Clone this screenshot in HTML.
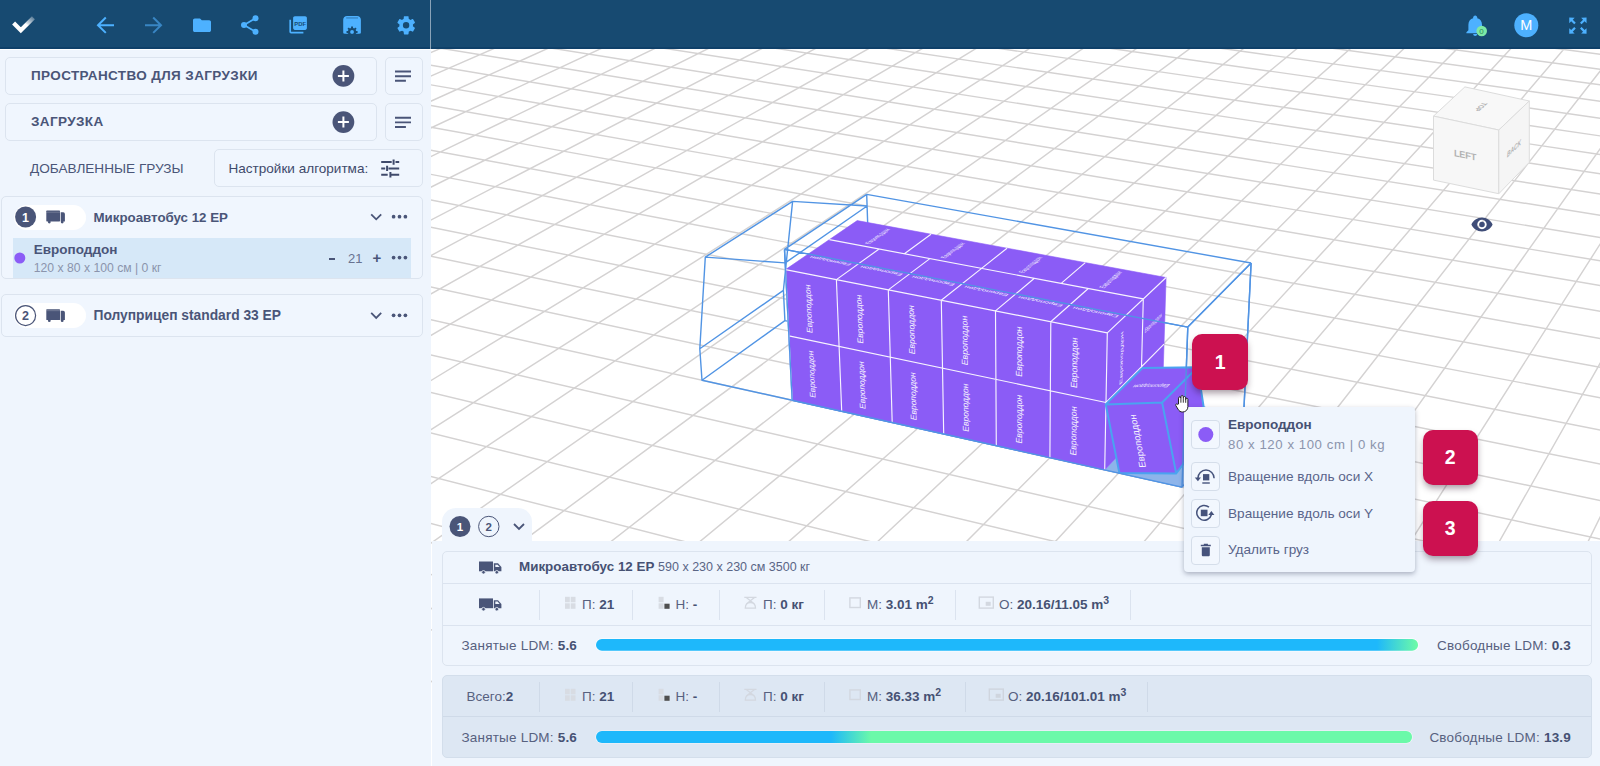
<!DOCTYPE html>
<html lang="ru"><head><meta charset="utf-8"><title>3D</title>
<style>
*{box-sizing:border-box;margin:0;padding:0}
html,body{width:1600px;height:766px;overflow:hidden}
body{font-family:"Liberation Sans",sans-serif;color:#4a5578;background:#fff;position:relative;font-size:14px}
.abs{position:absolute}
#hdr{z-index:5;position:absolute;left:0;top:0;width:1600px;height:49px;background:#174a71;border-bottom:2px solid #0f4069}
#hdr .vl{position:absolute;left:430px;top:0;width:1px;height:49px;background:#8aa3b8}
#side{position:absolute;left:0;top:48px;width:431px;height:718px;background:linear-gradient(#fff 0,#fff 2px,#eff5fd 2px)}
.card{position:absolute;border:1px solid #dce4ef;border-radius:5px;background:#f0f6fe}
.ttl{position:absolute;font-weight:700;font-size:13.5px;letter-spacing:.38px;color:#4a5578;white-space:nowrap}
.t{position:absolute;white-space:nowrap;line-height:1}
.t{color:#57617f}.b{font-weight:700;color:#465173}
#view{position:absolute;left:431px;top:48px;width:1169px;height:718px;overflow:hidden;background:#fff}
#scene{position:absolute;left:-431px;top:-48px}
#bottom{position:absolute;left:432px;top:540.700px;width:1168px;height:226px;background:#eff5fd}
#tab{position:absolute;left:442.300px;top:508.300px;width:89.600px;height:33px;background:#eff5fd;border-radius:14px 14px 0 0}
.vsep{position:absolute;width:1px;height:30px;background:#dbe3ef}
.bar{position:absolute;height:11px;border-radius:6px}
.ibox{position:absolute;left:1191.300px;width:29px;height:29px;border:1px solid #d5deea;border-radius:4px;background:#f2f7fe}
.badge{position:absolute;width:55px;height:55px;border-radius:10px;background:#cc1150;color:#fff;font-weight:700;font-size:19.500px;text-align:center;line-height:55px;box-shadow:0 4px 7px -1px rgba(40,10,30,.42)}
</style></head><body>
<!-- 3D VIEW -->
<div id="view"><svg id="scene" width="1600" height="766" viewBox="0 0 1600 766">
<path d="M702.5 -98.9 L-537.2 396.1 M735.5 -94.8 L-492.0 409.9 M769.0 -90.7 L-445.7 423.9 M802.9 -86.5 L-398.1 438.4 M837.3 -82.2 L-349.3 453.2 M872.2 -77.9 L-299.3 468.4 M907.6 -73.5 L-247.9 484.0 M943.5 -69.0 L-195.1 500.0 M979.9 -64.5 L-140.9 516.4 M1016.8 -59.9 L-85.1 533.4 M1054.2 -55.3 L-27.8 550.8 M1092.2 -50.6 L31.1 568.7 M1130.8 -45.8 L91.8 587.1 M1169.9 -40.9 L154.2 606.0 M1209.6 -36.0 L218.5 625.5 M1249.9 -31.0 L284.8 645.6 M1290.8 -25.9 L353.0 666.4 M1332.4 -20.8 L423.5 687.7 M1374.6 -15.5 L496.1 709.8 M1417.4 -10.2 L571.1 732.6 M1460.9 -4.8 L648.6 756.1 M1505.1 0.7 L728.6 780.4 M1550.0 6.2 L811.4 805.5 M1595.6 11.9 L897.0 831.5 M1641.9 17.6 L985.6 858.4 M1689.0 23.5 L1077.4 886.2 M1736.9 29.4 L1172.5 915.1 M1785.5 35.5 L1271.1 945.0 M1835.0 41.6 L1373.5 976.1 M1885.3 47.9 L1479.8 1008.4 M1936.5 54.2 L1590.3 1041.9 M681.0 -90.4 L1984.6 74.5 M658.9 -81.5 L1980.6 88.8 M636.1 -72.4 L1976.5 103.7 M612.6 -63.1 L1972.2 119.1 M588.5 -53.4 L1967.7 135.1 M563.5 -43.4 L1963.1 151.8 M537.8 -33.2 L1958.2 169.2 M511.3 -22.6 L1953.2 187.3 M483.9 -11.6 L1947.9 206.2 M455.6 -0.4 L1942.4 225.9 M426.4 11.3 L1936.7 246.4 M396.1 23.4 L1930.7 267.9 M364.9 35.9 L1924.4 290.4 M332.5 48.8 L1917.8 314.0 M298.9 62.2 L1910.9 338.8 M264.1 76.1 L1903.7 364.8 M228.0 90.5 L1896.1 392.1 M190.6 105.5 L1888.1 420.8 M151.7 121.0 L1879.6 451.2 M111.3 137.2 L1870.7 483.2 M69.2 154.0 L1861.2 517.0 M25.4 171.5 L1851.2 552.9 M-20.2 189.7 L1840.6 590.9 M-67.8 208.7 L1829.4 631.4 M-117.5 228.5 L1817.4 674.4 M-169.4 249.3 L1804.5 720.3 M-223.7 270.9 L1790.9 769.5 M-280.5 293.6 L1776.2 822.1 M-340.1 317.4 L1760.4 878.7 M-402.6 342.4 L1743.4 939.6 M-468.2 368.6 L1725.1 1005.4" stroke="#d4d2d2" stroke-width="1.45" fill="none"/>
<path d="M871.5 338.5 L1243.6 415.5 M871.5 338.5 L792.2 400.3 M871.5 338.5 L866.7 194.4 M866.7 194.4 L1251.1 263.0 M866.7 194.4 L784.5 249.4 M792.2 400.3 L1182.0 487.1 M792.2 400.3 L784.5 249.4 M784.5 249.4 L1187.8 327.1 M1243.6 415.5 L1182.0 487.1 M1243.6 415.5 L1251.1 263.0 M1251.1 263.0 L1187.8 327.1 M1182.0 487.1 L1187.8 327.1 M784.9 320.6 L783.4 290.4 L792.6 201.4 L867.1 206.0 L871.5 338.5 Z M702.0 380.2 L699.8 348.7 L705.3 257.1 L785.2 262.9 L792.2 400.3 Z M784.9 320.6 L702.0 380.2 M783.4 290.4 L699.8 348.7 M792.6 201.4 L705.3 257.1 M867.1 206.0 L785.2 262.9" stroke="#5194e4" stroke-width="1.4" fill="none" stroke-linejoin="round"/>
<path d="M1104.7 469.9 L1182.0 487.1 L1215.1 448.7 L1139.8 432.5 Z" fill="#8db4ea"/>
<path d="M785.5 269.6 L1107.3 332.9 L1166.1 277.5 L857.2 220.6 Z M792.2 400.3 L1104.7 469.9 L1107.3 332.9 L785.5 269.6 Z M1104.7 469.9 L1162.0 408.9 L1166.1 277.5 L1107.3 332.9 Z" fill="#8b5cf6" stroke="#8b5cf6" stroke-width="0.6"/>
<path d="M792.2 400.3 L785.5 269.6 M841.7 411.3 L836.4 279.6 M892.2 422.6 L888.3 289.9 M943.7 434.0 L941.3 300.3 M996.3 445.8 L995.5 310.9 M1049.9 457.7 L1050.8 321.8 M1104.7 469.9 L1107.3 332.9 M788.9 335.9 L1106.0 402.5 M785.5 269.6 L1107.3 332.9 M836.4 279.6 L879.1 249.0 M888.3 289.9 L929.9 258.6 M941.3 300.3 L981.6 268.4 M995.5 310.9 L1034.4 278.3 M1050.8 321.8 L1088.3 288.5 M829.4 239.6 L1143.3 298.9 M904.4 253.8 L931.0 234.2 M981.6 268.4 L1007.0 248.2 M1061.2 283.4 L1085.3 262.6 M1107.3 332.9 L1166.1 277.5 M1139.8 432.5 L1143.3 298.9 M1106.0 402.5 L1164.0 344.1" stroke="#ffffff" stroke-opacity="0.93" stroke-width="1.15" fill="none"/>
<g font-family="Liberation Sans, sans-serif"><text transform="matrix(-0.0295 -0.6461 0.6226 0.1349 815.43 374.99)" font-size="12.9" text-anchor="middle" y="-1.68" fill="#fff" opacity="0.93" >Европоддон</text>
<text transform="matrix(-0.0304 -0.6649 0.6313 0.1285 812.43 309.45)" font-size="12.9" text-anchor="middle" y="-1.68" fill="#fff" opacity="0.93" >Европоддон</text>
<text transform="matrix(-0.0226 -0.6511 0.6353 0.1376 865.74 385.89)" font-size="12.9" text-anchor="middle" y="-1.68" fill="#fff" opacity="0.93" >Европоддон</text>
<text transform="matrix(-0.0233 -0.6702 0.6443 0.1312 863.44 319.84)" font-size="12.9" text-anchor="middle" y="-1.68" fill="#fff" opacity="0.93" >Европоддон</text>
<text transform="matrix(-0.0154 -0.6561 0.6484 0.1405 917.07 397.01)" font-size="12.9" text-anchor="middle" y="-1.68" fill="#fff" opacity="0.93" >Европоддон</text>
<text transform="matrix(-0.0158 -0.6756 0.6577 0.1339 915.52 330.44)" font-size="12.9" text-anchor="middle" y="-1.68" fill="#fff" opacity="0.93" >Европоддон</text>
<text transform="matrix(-0.0078 -0.6612 0.6618 0.1434 969.47 408.36)" font-size="12.9" text-anchor="middle" y="-1.68" fill="#fff" opacity="0.93" >Европоддон</text>
<text transform="matrix(-0.0081 -0.6811 0.6716 0.1367 968.68 341.26)" font-size="12.9" text-anchor="middle" y="-1.68" fill="#fff" opacity="0.93" >Европоддон</text>
<text transform="matrix(0.0000 -0.6664 0.6757 0.1464 1022.97 419.95)" font-size="12.9" text-anchor="middle" y="-1.68" fill="#fff" opacity="0.93" >Европоддон</text>
<text transform="matrix(0.0000 -0.6866 0.6859 0.1396 1022.97 352.32)" font-size="12.9" text-anchor="middle" y="-1.68" fill="#fff" opacity="0.93" >Европоддон</text>
<text transform="matrix(0.0082 -0.6717 0.6901 0.1495 1077.59 431.79)" font-size="12.9" text-anchor="middle" y="-1.68" fill="#fff" opacity="0.93" >Европоддон</text>
<text transform="matrix(0.0085 -0.6923 0.7007 0.1427 1078.43 363.61)" font-size="12.9" text-anchor="middle" y="-1.68" fill="#fff" opacity="0.93" >Европоддон</text>
<text transform="matrix(0.0147 -0.6657 0.2948 -0.3065 1121.74 424.05)" font-size="13.5" text-anchor="middle" y="-1.35" fill="#fff" opacity="0.9" >Европоддон</text>
<text transform="matrix(0.0151 -0.6859 0.2988 -0.2924 1123.23 356.48)" font-size="13.5" text-anchor="middle" y="-1.35" fill="#fff" opacity="0.9" >Европоддон</text>
<text transform="matrix(0.2827 -0.2753 -0.0191 0.6723 1153.29 322.49)" font-size="10.5" text-anchor="middle" y="3.78" fill="#fff" opacity="0.9" >Европоддон</text>
<text transform="matrix(-0.6292 -0.1215 0.3623 -0.2534 830.32 260.99)" font-size="11.4" text-anchor="middle" y="4.10" fill="#fff" opacity="0.9" >Европоддон</text>
<text transform="matrix(-0.6421 -0.1240 0.3524 -0.2586 881.18 270.82)" font-size="11.4" text-anchor="middle" y="4.10" fill="#fff" opacity="0.9" >Европоддон</text>
<text transform="matrix(-0.6554 -0.1266 0.3420 -0.2640 933.08 280.84)" font-size="11.4" text-anchor="middle" y="4.10" fill="#fff" opacity="0.9" >Европоддон</text>
<text transform="matrix(-0.6692 -0.1292 0.3311 -0.2695 986.07 291.08)" font-size="11.4" text-anchor="middle" y="4.10" fill="#fff" opacity="0.9" >Европоддон</text>
<text transform="matrix(-0.6833 -0.1320 0.3197 -0.2752 1040.17 301.52)" font-size="11.4" text-anchor="middle" y="4.10" fill="#fff" opacity="0.9" >Европоддон</text>
<text transform="matrix(-0.6979 -0.1348 0.3077 -0.2811 1095.43 312.20)" font-size="11.4" text-anchor="middle" y="4.10" fill="#fff" opacity="0.9" >Европоддон</text>
<text transform="matrix(0.3408 -0.2405 0.6190 0.1154 877.29 236.35)" font-size="11" text-anchor="middle" y="3.96" fill="#fff" opacity="0.9" >Европоддон</text>
<text transform="matrix(0.3262 -0.2478 0.6376 0.1189 952.67 250.40)" font-size="11" text-anchor="middle" y="3.96" fill="#fff" opacity="0.9" >Европоддон</text>
<text transform="matrix(0.3106 -0.2554 0.6572 0.1225 1030.34 264.88)" font-size="11" text-anchor="middle" y="3.96" fill="#fff" opacity="0.9" >Европоддон</text>
<text transform="matrix(0.2938 -0.2634 0.6776 0.1263 1110.41 279.81)" font-size="11" text-anchor="middle" y="3.96" fill="#fff" opacity="0.9" >Европоддон</text></g>
<path d="M1105.7 404.4 L1162.1 402.5 L1176.2 473.4 L1119.4 473.0 Z M1105.7 404.4 L1142.5 368.0 L1197.5 367.2 L1162.1 402.5 Z M1162.1 402.5 L1197.5 367.2 L1207.5 432.0 L1176.2 473.4 Z" fill="#8b5cf6" stroke="#4aa3f0" stroke-width="2" stroke-linejoin="round"/>
<g font-family="Liberation Sans, sans-serif" fill="#fff"><text transform="matrix(0.19 0.98 -0.98 0.03 1137.5 441) scale(-1,-1)" font-size="9.6" text-anchor="middle" y="3.4" opacity=".95">Европоддон</text><text transform="matrix(0.98 -0.02 -0.70 0.70 1151 386) scale(-1,-1)" font-size="6.5" text-anchor="middle" y="2.3" opacity="0.9">Европоддон</text></g>
<path d="M784.5 249.4 L1187.8 327.1 M792.2 400.3 L784.5 249.4 M792.2 400.3 L1182.0 487.1 M1182.0 487.1 L1187.8 327.1 M1187.8 327.1 L1251.1 263.0 M1243.6 415.5 L1251.1 263.0 M1243.6 415.5 L1182.0 487.1" stroke="#5194e4" stroke-width="1.4" fill="none"/>
</svg></div>
<!-- VIEW CUBE + EYE -->
<svg class="abs" style="left:1420px;top:70px" width="130" height="175" viewBox="1420 70 130 175">
<g stroke="#dcdcdc" stroke-width="1" stroke-linejoin="round">
<path d="M1433.5 116.1 L1464.9 86.9 L1529.3 101 L1498.8 130 Z" fill="#f8f8f8"/>
<path d="M1433.5 116.1 L1498.8 130 L1498.8 193.7 L1433.5 180.1 Z" fill="#f7f7f7"/>
<path d="M1498.8 130 L1529.3 101 L1529.3 162.3 L1498.8 193.7 Z" fill="#f5f5f5"/>
</g>
<g font-family="Liberation Sans, sans-serif" fill="#b2b2b2">
<text transform="matrix(1 .21 0 1 1465 158.300)" font-size="9.300" font-weight="700" text-anchor="middle" letter-spacing="-.3">LEFT</text>
<text transform="matrix(.62 -.6 0 1 1514 151)" font-size="7.800" text-anchor="middle" font-weight="700" font-style="italic">BACK</text>
<text transform="matrix(-.55 .5 -.9 -.2 1481 107)" font-size="8" text-anchor="middle" font-weight="700" y="3">TOP</text>
</g>
<path d="M1482 217.5c-4.8 0-8.9 2.9-10.6 7 1.7 4.1 5.800 7 10.6 7s8.900-2.900 10.600-7c-1.700-4.100-5.800-7-10.600-7zm0 11.700a4.700 4.700 0 1 1 0-9.400 4.700 4.700 0 0 1 0 9.400zm0-7.500a2.800 2.800 0 1 0 0 5.600 2.800 2.800 0 0 0 0-5.600z" fill="#3f4d78"/>
</svg>

<!-- HEADER -->
<div id="hdr"><div class="vl"></div>
<svg class="abs" style="left:0;top:0" width="1600" height="48" viewBox="0 0 1600 48">
<defs><linearGradient id="ck" x1="0" y1="1" x2="1" y2="0"><stop offset=".55" stop-color="#fff"/><stop offset=".62" stop-color="#d8dfe6"/><stop offset="1" stop-color="#5c7f9a"/></linearGradient></defs>
<path d="M13.600 23.100 L20.800 30.300 L33.400 17.700" fill="none" stroke="url(#ck)" stroke-width="4.200"/>
<g fill="none" stroke="#4db1ff" stroke-width="2">
<path d="M114 25.200H99M105.800 17.500L98 25.200l7.800 7.700"/>
<path d="M145 25.200h15M153.200 17.500l7.800 7.700-7.800 7.700" stroke="#3986c4"/>
</g>
<g fill="#4db1ff">
<path d="M200 18.500h-5.200c-1 0-1.800.8-1.800 1.800v10c0 1 .8 1.800 1.800 1.800h14.400c1 0 1.800-.8 1.800-1.800v-8.200c0-1-.8-1.800-1.800-1.800h-7.400z"/>
<g><circle cx="255.500" cy="18.300" r="3"/><circle cx="244" cy="25" r="3"/><circle cx="255.500" cy="31.700" r="3"/><path d="M244 25l11.500-6.700M244 25l11.500 6.700" stroke="#4db1ff" stroke-width="1.800" fill="none"/></g>
<path d="M294.900 16.300h10.200c1 0 1.800.8 1.800 1.800v10c0 1-.8 1.800-1.800 1.800h-10.200c-1 0-1.800-.8-1.800-1.800v-10c0-1 .8-1.800 1.800-1.800z"/>
<path d="M290.200 19.800v11.900c0 .5.400.9.900.9h12.300" fill="none" stroke="#4db1ff" stroke-width="1.700"/>
<path d="M347 16h10.100c2.100 0 3.800 1.700 3.800 3.800v12.600c0 .8-.6 1.400-1.400 1.400h-1c-.8 0-1.400-.6-1.400-1.400v-1.900h-10.100v1.900c0 .8-.6 1.400-1.400 1.400h-1c-.8 0-1.400-.6-1.400-1.400V19.800c0-2.100 1.700-3.800 3.800-3.800z"/>
<rect x="345.600" y="26" width="13" height="7.800"/>
<path d="M351.09 26.48 L353.01 26.48 L353.03 27.92 L354.24 28.42 L355.27 27.42 L356.63 28.78 L355.63 29.81 L356.13 31.02 L357.57 31.04 L357.57 32.96 L356.13 32.98 L355.63 34.19 L356.63 35.22 L355.27 36.58 L354.24 35.58 L353.03 36.08 L353.01 37.52 L351.09 37.52 L351.07 36.08 L349.86 35.58 L348.83 36.58 L347.47 35.22 L348.47 34.19 L347.97 32.98 L346.53 32.96 L346.53 31.04 L347.97 31.02 L348.47 29.81 L347.47 28.78 L348.83 27.42 L349.86 28.42 L351.07 27.92Z" fill="#174a71"/>
<circle cx="352.050" cy="32" r="1.900"/>
<rect x="343" y="33.900" width="18.200" height="4" fill="#174a71"/>
<path d="M413.300 26c0-.3.100-.6.100-.900s0-.6-.1-.9l1.900-1.500c.2-.1.200-.4.100-.6l-1.800-3.100c-.1-.2-.4-.3-.6-.2l-2.200.9c-.5-.4-1-.7-1.500-.9l-.3-2.400c0-.2-.2-.4-.5-.4h-3.600c-.2 0-.4.200-.5.400l-.3 2.400c-.5.200-1.100.5-1.500.9l-2.200-.9c-.2-.1-.5 0-.6.200l-1.800 3.100c-.1.200-.1.500.1.600l1.900 1.500c0 .3-.1.600-.1.900s0 .6.100.9l-1.900 1.500c-.2.100-.2.400-.1.600l1.800 3.100c.1.200.4.300.6.200l2.200-.9c.5.400 1 .7 1.500.9l.3 2.400c0 .2.200.4.500.4h3.600c.2 0 .4-.2.500-.4l.3-2.400c.5-.2 1.100-.5 1.500-.9l2.200.9c.2.100.5 0 .6-.2l1.800-3.100c.1-.2.100-.5-.1-.6zm-6.800 2.300a3.200 3.200 0 1 1 0-6.400 3.200 3.200 0 0 1 0 6.400z" transform="translate(-.4 .2) scale(1.0)"/>
</g>
<g font-family="Liberation Sans, sans-serif" font-weight="700" font-size="5.900" fill="#174a71"><text x="294.300" y="25.800" letter-spacing="0">PDF</text></g>
<rect x="346.200" y="17" width="11.800" height="1.800" fill="#174a71" opacity=".3"/>
<path d="M349 33.700v-1.500l1.300-.2.500-1.200-.8-1 1.100-1.100 1 .8 1.200-.5.200-1.300" fill="none"/>
<!-- bell -->
<path transform="translate(.9 -.7)" d="M1474.300 36.800c1.100 0 2-.9 2-2h-4c0 1.100.9 2 2 2zm6.800-5.800v-5.600c0-3.200-1.700-5.800-4.700-6.500v-.7c0-.9-.9-2.100-2.100-2.100s-2.100 1.200-2.100 2.100v.7c-3 .7-4.700 3.300-4.700 6.500V31l-2 2v1h17.600v-1z" fill="#4db1ff"/>
<circle cx="1481.700" cy="31" r="5.300" fill="#7de9a6"/>
<text x="1481.600" y="33.700" font-family="Liberation Sans, sans-serif" font-size="8" fill="#2f8a57" text-anchor="middle">0</text>
<circle cx="1526.300" cy="25.300" r="12" fill="#4db1ff"/>
<text x="1526.300" y="30.300" font-family="Liberation Sans, sans-serif" font-size="14.500" fill="#fff" text-anchor="middle">M</text>
<g fill="#4db1ff" transform="translate(1577.900 25.700) scale(.92) translate(-1577.900 -25.850)">
<path d="M1568.500 17v6.200l2.100-2.100 3.300 3.300 1.700-1.700-3.300-3.300 2.100-2.100z"/>
<path d="M1587.300 17v6.200l-2.100-2.100-3.300 3.300-1.700-1.700 3.300-3.300-2.100-2.100z"/>
<path d="M1568.500 34.700v-6.200l2.100 2.100 3.300-3.300 1.700 1.700-3.300 3.300 2.100 2.100z" transform="translate(0 0)"/>
<path d="M1587.300 34.700v-6.200l-2.100 2.100-3.300-3.300-1.700 1.700 3.300 3.300-2.100 2.100z"/>
</g>
</svg>
</div>

<!-- SIDEBAR -->
<div id="side">
<div class="card" style="left:5px;top:8.500px;width:372px;height:38.500px"></div>
<div class="card" style="left:385px;top:8.500px;width:38px;height:38.500px"></div>
<div class="card" style="left:5px;top:55px;width:372px;height:38px"></div>
<div class="card" style="left:385px;top:55px;width:38px;height:38px"></div>
<div class="ttl" style="left:31px;top:20px">ПРОСТРАНСТВО ДЛЯ ЗАГРУЗКИ</div>
<div class="ttl" style="left:31px;top:66px">ЗАГРУЗКА</div>
<div class="t" style="left:30px;top:113.500px;font-size:13.600px;color:#4a5578">ДОБАВЛЕННЫЕ ГРУЗЫ</div>
<div class="card" style="left:214px;top:101px;width:209px;height:38px"></div>
<div class="t" style="left:228.500px;top:113.500px;font-size:13.550px;color:#3f4a6b">Настройки алгоритма:</div>
<svg class="abs" style="left:0;top:0" width="431" height="300" viewBox="0 48 431 300">
<g fill="#4a5578">
<circle cx="343.400" cy="75.900" r="10.900"/><circle cx="343.400" cy="122.100" r="10.900"/>
<g fill="none" stroke="#4a5578" stroke-width="1.900">
<path d="M395 71.500h16M395 76.200h16M395 80.800h10.900"/>
<path d="M395 117.700h16M395 122.400h16M395 127h10.900"/>
</g>
<!-- tune icon -->
<g fill="none" stroke="#3f4a6b" stroke-width="2">
<path d="M381.200 162.100h10.500M395.500 162.100h3.700M381.200 168.400h4M388.500 168.400h10.700M381.200 174.700h6.500M390.500 174.700h8.700M393.600 159.400v5.400M387.100 165.700v5.400M390.400 172v5.400"/>
</g>
</g>
<g fill="none" stroke="#fff" stroke-width="2"><path d="M337.900 75.900h11M343.400 70.400v11M337.900 122.100h11M343.400 116.600v11"/></g>
</svg>

<!-- cargo space cards -->
<div class="card" style="left:1px;top:147.500px;width:422px;height:83.500px"></div>
<div class="abs" style="left:13px;top:190px;width:398px;height:40px;background:#d6e8f8"></div>
<div class="abs" style="left:14px;top:156.500px;width:72px;height:25px;border-radius:13px;background:#fff"></div>
<div class="t b" style="left:93.500px;top:162.500px;font-size:13.300px;color:#4a5578">Микроавтобус 12 ЕР</div>
<div class="t b" style="left:33.800px;top:195px;font-size:13.500px;color:#4a5578">Европоддон</div>
<div class="t" style="left:33.800px;top:213.500px;font-size:12.200px;color:#8b94ac">120 x 80 x 100 см | 0 кг</div>
<div class="abs" style="left:329.400px;top:209.700px;width:6px;height:2.200px;background:#4a5578"></div>
<div class="t" style="left:348px;top:203.500px;font-size:13px;color:#687290">21</div>
<div class="t b" style="left:372.500px;top:201.500px;font-size:15px;color:#4a5578">+</div>

<div class="card" style="left:1px;top:246px;width:422px;height:43px"></div>
<div class="abs" style="left:14px;top:255px;width:72px;height:25px;border-radius:13px;background:#fff"></div>
<div class="t b" style="left:93.500px;top:260.500px;font-size:13.800px;color:#4a5578">Полуприцеп standard 33 ЕР</div>
<svg class="abs" style="left:0;top:0" width="431" height="300" viewBox="0 48 431 300">
<circle cx="25.600" cy="217" r="10.500" fill="#4a5578"/>
<circle cx="25.600" cy="315.600" r="10" fill="#fff" stroke="#4a5578" stroke-width="1.200"/>
<g font-family="Liberation Sans, sans-serif" font-weight="700" font-size="12.500" text-anchor="middle"><text x="25.600" y="221.500" fill="#fff">1</text><text x="25.600" y="320" fill="#4a5578">2</text></g>
<g id="trk" fill="#4a5578">
<rect x="46.300" y="210.600" width="13.700" height="10.800" rx=".6"/><path d="M60.700 212.200h2.500a1.700 1.700 0 0 1 1.700 1.700v7.500h-4.200z"/>
<circle cx="49.300" cy="222.100" r="1.400"/><circle cx="62.200" cy="222.100" r="1.400"/>
<rect x="46.300" y="211.800" width="13.700" height=".7" fill="#fff" opacity=".3"/>
</g>
<use href="#trk" y="98.600"/>
<g fill="none" stroke="#4a5578" stroke-width="1.800"><path d="M371.200 214.300l5 5 5-5"/><path d="M371.200 312.900l5 5 5-5"/></g>
<g fill="#4a5578">
<circle cx="393.600" cy="216.700" r="1.850"/><circle cx="399.500" cy="216.700" r="1.850"/><circle cx="405.400" cy="216.700" r="1.850"/>
<circle cx="393.600" cy="257.600" r="1.850"/><circle cx="399.500" cy="257.600" r="1.850"/><circle cx="405.400" cy="257.600" r="1.850"/>
<circle cx="393.600" cy="315.300" r="1.850"/><circle cx="399.500" cy="315.300" r="1.850"/><circle cx="405.400" cy="315.300" r="1.850"/>
</g>
<circle cx="19.800" cy="258" r="5.500" fill="#8b5cf6"/>
</svg>
</div>

<!-- BOTTOM PANEL -->
<div id="tab"></div>
<div id="bottom"></div>
<div class="card" style="left:442px;top:550.600px;width:1150px;height:115px;background:#eff5fd"></div>
<div class="abs" style="left:443px;top:583.400px;width:1148px;height:1px;background:#dbe3ef"></div>
<div class="abs" style="left:443px;top:624.500px;width:1148px;height:1px;background:#dbe3ef"></div>
<div class="card" style="left:442px;top:675.300px;width:1150px;height:83px;background:#dde7f3;border-color:#d3deeb"></div>
<div class="abs" style="left:443px;top:716.300px;width:1148px;height:1px;background:#cfdae8"></div>
<svg class="abs" style="left:431px;top:500px" width="1169" height="266" viewBox="431 500 1169 266">
<circle cx="460" cy="526.500" r="10.500" fill="#4a5578"/>
<circle cx="488.800" cy="526.500" r="10.200" fill="none" stroke="#4a5578" stroke-width="1"/>
<g font-family="Liberation Sans, sans-serif" font-weight="700" font-size="11.500" text-anchor="middle"><text x="460" y="530.600" fill="#fff">1</text><text x="488.600" y="530.600" fill="#4a5578">2</text></g>
<path d="M514 524l5 5 5-5" fill="none" stroke="#4a5578" stroke-width="1.800"/>
<g id="trk2" fill="#4a5578">
<path d="M479 561.500h14v9.800h-14z"/><path d="M493.800 563.300h4.200l3.400 3.700v4.300h-7.600z"/>
<circle cx="483.500" cy="572.300" r="1.800" stroke="#eff5fd" stroke-width=".8"/><circle cx="496.800" cy="572.300" r="1.800" stroke="#eff5fd" stroke-width=".8"/>
<path d="M495.300 564.700h2.300l2 2.300h-4.300z" fill="#eff5fd"/>
</g>
<use href="#trk2" y="36.900"/>
<!-- small stat icons -->
<g id="ics">
<g fill="#d8dce3"><rect x="565" y="596.800" width="4.800" height="5.500"/><rect x="570.700" y="596.800" width="4.800" height="5.500"/><rect x="565" y="603.300" width="4.800" height="5.500"/><rect x="570.700" y="603.300" width="4.800" height="5.500"/></g>
<rect x="658.600" y="596.800" width="5" height="5.500" fill="#d8dce3"/><rect x="658.600" y="603.300" width="5" height="5.500" fill="#d8dce3"/><rect x="664.400" y="603.700" width="5.200" height="5.100" fill="#4f4f4f"/>
<g fill="none" stroke="#d3d8e0" stroke-width="1.300"><path d="M744.300 597.300h12.200M746.300 597.500l8.200 6.500M754.500 597.500l-8.200 6.500M745.300 608.200c0-3.600 2-5.600 5.100-5.600s5.100 2 5.100 5.600z"/></g>
<rect x="849.900" y="597.900" width="10.400" height="9.600" fill="none" stroke="#d3d8e0" stroke-width="1.400"/>
</g>
<rect x="979.300" y="597.100" width="14" height="11" fill="none" stroke="#d3d8e0" stroke-width="1.400"/><rect x="985.700" y="601.800" width="5" height="4" fill="#d3d8e0"/>
<use href="#ics" y="92"/>
<rect x="989.300" y="689.100" width="14" height="11" fill="none" stroke="#cfd5de" stroke-width="1.400"/><rect x="995.700" y="693.800" width="5" height="4" fill="#cfd5de"/>
<defs>
<linearGradient id="g1" x1="0" x2="1"><stop offset="0" stop-color="#1eb8fb"/><stop offset=".95" stop-color="#1eb8fb"/><stop offset=".998" stop-color="#6bf9a9"/></linearGradient>
<linearGradient id="g2" x1="0" x2="1"><stop offset="0" stop-color="#1eb8fb"/><stop offset=".288" stop-color="#1eb8fb"/><stop offset=".337" stop-color="#6bf9a9"/></linearGradient>
</defs>
<rect x="595.300" y="638.300" width="823.500" height="13.200" rx="6.600" fill="#fff" opacity=".8"/><rect x="596" y="639" width="822.100" height="11.800" rx="5.900" fill="url(#g1)"/>
<rect x="595.300" y="730.400" width="817.500" height="13.200" rx="6.600" fill="#fff" opacity=".6"/><rect x="596" y="731.100" width="816.100" height="11.800" rx="5.900" fill="url(#g2)"/>
</svg>
<div class="vsep" style="left:539px;top:590px"></div><div class="vsep" style="left:632px;top:590px"></div><div class="vsep" style="left:719px;top:590px"></div><div class="vsep" style="left:824px;top:590px"></div><div class="vsep" style="left:955px;top:590px"></div><div class="vsep" style="left:1130px;top:590px"></div>
<div class="vsep" style="left:539px;top:682px;background:#cfdae8"></div><div class="vsep" style="left:632px;top:682px;background:#cfdae8"></div><div class="vsep" style="left:719px;top:682px;background:#cfdae8"></div><div class="vsep" style="left:824px;top:682px;background:#cfdae8"></div><div class="vsep" style="left:965px;top:682px;background:#cfdae8"></div><div class="vsep" style="left:1147px;top:682px;background:#cfdae8"></div>

<div class="t b" style="left:519px;top:559.500px;font-size:13.400px">Микроавтобус 12 ЕР <span style="font-weight:400;font-size:12.500px;color:#5a6586;position:relative;top:.7px">590 x 230 x 230 см 3500 кг</span></div>
<div class="t" style="left:582px;top:597.500px;font-size:13.500px">П: <span class="b">21</span></div>
<div class="t" style="left:675.500px;top:597.500px;font-size:13.500px">Н: <span class="b">-</span></div>
<div class="t" style="left:763px;top:597.500px;font-size:13.500px">П: <span class="b">0 кг</span></div>
<div class="t" style="left:867px;top:597.500px;font-size:13.500px">М: <span class="b">3.01 m<sup style="font-size:10.500px;vertical-align:5.500px;line-height:0">2</sup></span></div>
<div class="t" style="left:999px;top:597.500px;font-size:13.500px">О: <span class="b">20.16/11.05 m<sup style="font-size:10.500px;vertical-align:5.500px;line-height:0">3</sup></span></div>
<div class="t" style="left:461.500px;top:638.500px;font-size:13.500px;letter-spacing:.2px">Занятые LDM: <span class="b">5.6</span></div>
<div class="t" style="right:29px;top:638.500px;font-size:13.500px;letter-spacing:.2px">Свободные LDM: <span class="b">0.3</span></div>

<div class="t" style="left:466.500px;top:689.500px;font-size:13.500px">Всего:<span class="b">2</span></div>
<div class="t" style="left:582px;top:689.500px;font-size:13.500px">П: <span class="b">21</span></div>
<div class="t" style="left:675.500px;top:689.500px;font-size:13.500px">Н: <span class="b">-</span></div>
<div class="t" style="left:763px;top:689.500px;font-size:13.500px">П: <span class="b">0 кг</span></div>
<div class="t" style="left:867px;top:689.500px;font-size:13.500px">М: <span class="b">36.33 m<sup style="font-size:10.500px;vertical-align:5.500px;line-height:0">2</sup></span></div>
<div class="t" style="left:1008px;top:689.500px;font-size:13.500px">О: <span class="b">20.16/101.01 m<sup style="font-size:10.500px;vertical-align:5.500px;line-height:0">3</sup></span></div>
<div class="t" style="left:461.500px;top:730.500px;font-size:13.500px;letter-spacing:.2px">Занятые LDM: <span class="b">5.6</span></div>
<div class="t" style="right:29px;top:730.500px;font-size:13.500px;letter-spacing:.2px">Свободные LDM: <span class="b">13.9</span></div>

<!-- POPUP -->
<div class="abs" style="left:1184px;top:407px;width:231px;height:165px;background:#eff5fd;border-radius:4px;box-shadow:0 2px 5px rgba(40,50,80,.35)"></div>
<div class="ibox" style="top:420px"></div><div class="ibox" style="top:462.300px"></div><div class="ibox" style="top:499.200px"></div><div class="ibox" style="top:536px"></div>
<div class="t b" style="left:1228px;top:417.500px;font-size:13.500px">Европоддон</div>
<div class="t" style="left:1228px;top:437.500px;font-size:13.200px;color:#8b94ac;letter-spacing:.57px">80 x 120 x 100 cm | 0 kg</div>
<div class="t" style="left:1228px;top:470px;font-size:13.600px;color:#59648a">Вращение вдоль оси X</div>
<div class="t" style="left:1228px;top:506.500px;font-size:13.600px;color:#59648a">Вращение вдоль оси Y</div>
<div class="t" style="left:1228px;top:543px;font-size:13.600px;color:#59648a">Удалить груз</div>
<svg class="abs" style="left:1184px;top:407px" width="231" height="165" viewBox="1184 407 231 165">
<circle cx="1205.800" cy="434.500" r="7.500" fill="#8b5cf6"/>
<g fill="none" stroke="#46537c" stroke-width="1.500">
<path d="M1197.900 478.200a8.100 8.100 0 0 1 16.200 0"/>
<path d="M1208.960 507.130A7.400 7.400 0 1 0 1211.350 514.700"/>
</g>
<g fill="#46537c">
<path d="M1194.800 477.400h6.200l-3.100 3.800z"/><rect x="1203" y="474.100" width="6.300" height="6.300"/><rect x="1202.300" y="482.300" width="7.500" height="1.400"/>
<rect x="1200.800" y="509.700" width="6.700" height="6.500"/><path d="M1208.300 515.100h6.100l-3 -4.200z"/>
<path d="M1201.800 547.200h8v7.700c0 .8-.6 1.400-1.400 1.400h-5.200c-.8 0-1.400-.6-1.400-1.400zM1200.800 544.800h10v1.500h-10zM1203.800 543.800h4.100v1h-4.100z"/>
</g>
</svg>
<div class="badge" style="left:1191.900px;top:334.400px;width:56.400px;height:56px;line-height:56px">1</div>
<div class="badge" style="left:1422.700px;top:430.400px">2</div>
<div class="badge" style="left:1422.700px;top:500.700px">3</div>
<!-- cursor -->
<svg class="abs" style="left:1172px;top:392px" width="22" height="24" viewBox="0 0 22 24">
<path d="M6.500 12V6.200c0-.8.600-1.300 1.200-1.300s1.200.5 1.200 1.300V4.800c0-.8.600-1.300 1.200-1.300s1.200.5 1.200 1.300v1c0-.8.600-1.300 1.200-1.300s1.200.5 1.200 1.300v1.600c0-.7.500-1.200 1.100-1.200s1.100.5 1.100 1.200v7.100c0 3.300-2.200 5.500-5.200 5.500-2.300 0-3.600-.9-4.700-2.800L3.900 13.700c-.4-.7-.2-1.400.3-1.700.6-.3 1.200-.1 1.600.5z" fill="#fff" stroke="#222" stroke-width="1" stroke-linejoin="round"/>
<path d="M8.900 6.200v4.500M11.300 5.800v4.900M13.700 6.800v4" stroke="#222" stroke-width=".9" fill="none"/>
</svg>

</body></html>
